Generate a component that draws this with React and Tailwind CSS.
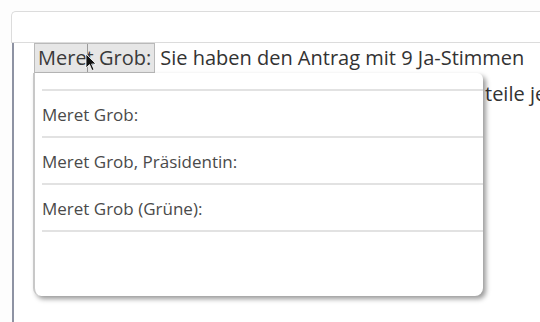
export default function App() {
  const font = { fontFamily: '"Open Sans", "Noto Sans", sans-serif' };
  return (
    <div className="relative w-[540px] h-[322px] overflow-hidden bg-[#fdfdfd]" style={font}>
      <div className="pt-[11px] pl-[11px]">
        <div className="h-[32px] border-t border-l border-b border-[#dcdcdc] rounded-tl-[5px] bg-white" />
        <div className="h-[279px] border-l-2 border-[#8e93a3] ml-px pl-[20px] bg-white">
          <div className="flex items-center h-[30px] whitespace-nowrap text-[20px] text-[#333] leading-none">
            <span className="relative flex items-center h-[30px] px-[3px] bg-[#e6e6e6] border border-[#b9b9b9] text-[#3a3a3a]">
              Meret Grob:
              <span className="absolute left-[52px] top-0 h-full w-px bg-[#9a9a9a]" />
            </span>
            <span className="ml-[5px]">Sie haben den Antrag mit 9 Ja-Stimmen</span>
          </div>
          <div className="whitespace-nowrap text-[20px] text-[#333] leading-none pt-[11px] pl-[451px]">
            teile je
          </div>
        </div>
      </div>

      <svg className="absolute left-[85px] top-[53px]" width="12" height="19" viewBox="0 0 12 19">
        <path d="M1 1 L1 15 L4.5 11.5 L7 17.5 L9 16.6 L6.6 11 L11 11 Z" fill="#111" stroke="#fff" strokeWidth="0.8" />
      </svg>

      <div className="absolute left-[33px] top-[73px] w-[450px] h-[223px] bg-white rounded-b-[8px] rounded-tr-[6px] border-l-2 border-[#c8c8c8] shadow-[3px_3px_5px_rgba(0,0,0,0.4)]">
        <div className="pt-[16px] pl-[7px]">
          <div className="border-t-2 border-[#e2e2e2]" />
          {["Meret Grob:", "Meret Grob, Präsidentin:", "Meret Grob (Grüne):"].map((t) => (
            <div key={t} className="h-[47px] flex items-center pt-[2px] border-b-2 border-[#e2e2e2] text-[17px] text-[#4a4a4a]">
              {t}
            </div>
          ))}
        </div>
      </div>
    </div>
  );
}
